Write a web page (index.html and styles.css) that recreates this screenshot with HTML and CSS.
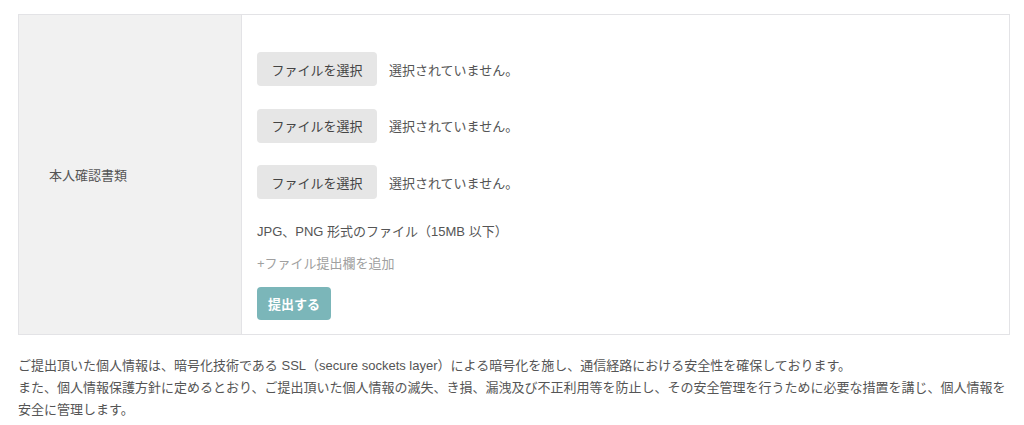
FILE: index.html
```html
<!DOCTYPE html>
<html lang="ja">
<head>
    <meta charset="UTF-8">
    <meta name="viewport" content="width=device-width, initial-scale=1.0">
    <title>本人確認書類の提出</title>
    <link rel="stylesheet" href="styles.css">
</head>
<body>

	<form class="upload-form">
		<table class="form-table">
			<tr>
				<th>本人確認書類</th>
				<td>
					<div class="file-row">
						<button type="button" class="file-btn">ファイルを選択</button>
						<span class="file-name">選択されていません。</span>
					</div>
					<div class="file-row">
						<button type="button" class="file-btn">ファイルを選択</button>
						<span class="file-name">選択されていません。</span>
					</div>
					<div class="file-row">
						<button type="button" class="file-btn">ファイルを選択</button>
						<span class="file-name">選択されていません。</span>
					</div>

					<p class="note">JPG、PNG 形式のファイル（15MB 以下）</p>
					<a href="#" class="add-field">+ファイル提出欄を追加</a>
					<button type="submit" class="submit-btn">提出する</button>
				</td>
			</tr>
		</table>
	</form>

	<p class="privacy">
		ご提出頂いた個人情報は、暗号化技術である SSL（secure sockets layer）による暗号化を施し、通信経路における安全性を確保しております。<br>
		また、個人情報保護方針に定めるとおり、ご提出頂いた個人情報の滅失、き損、漏洩及び不正利用等を防止し、その安全管理を行うために必要な措置を講じ、個人情報を安全に管理します。
	</p>

</body>
</html>
```

FILE: styles.css
```css
body {
	font-family: "Liberation Sans", "Noto Sans CJK JP", sans-serif;
	font-size: 13px;
	color: #555;
	background-color: #fff;
	margin: 0;
	padding: 14px 14px 0 18px;
}

.upload-form {
	margin: 0;
}

.form-table {
	width: 100%;
	border-collapse: collapse;
	border: 1px solid #e3e3e6;
}

.form-table th {
	width: 192px;
	padding: 0 0 0 30px;
	background-color: #f1f1f1;
	border-right: 1px solid #e3e3e6;
	font-weight: normal;
	text-align: left;
	vertical-align: middle;
}

.form-table td {
	padding: 37px 15px 14px 15px;
	vertical-align: top;
}

.file-row {
	display: flex;
	align-items: center;
	gap: 12px;
	height: 34px;
	margin-bottom: 22.5px;
}

.file-btn {
	width: 120px;
	height: 34px;
	border: none;
	border-radius: 4px;
	background-color: #e6e6e6;
	color: #444;
	font-family: inherit;
	font-size: 13px;
	padding: 0;
}

.note {
	margin: 0;
	line-height: 20px;
	color: #555;
}

.add-field {
	display: block;
	margin-top: 12px;
	line-height: 20px;
	color: #a0a0a0;
	text-decoration: none;
}

.submit-btn {
	display: block;
	margin-top: 13.5px;
	width: 74px;
	height: 33px;
	border: none;
	border-radius: 4px;
	background-color: #7bb6b9;
	color: #fff;
	font-family: inherit;
	font-size: 13px;
	font-weight: bold;
	padding: 0;
}

.privacy {
	margin: 20px 0 0 0;
	line-height: 22px;
	color: #555;
}
```
